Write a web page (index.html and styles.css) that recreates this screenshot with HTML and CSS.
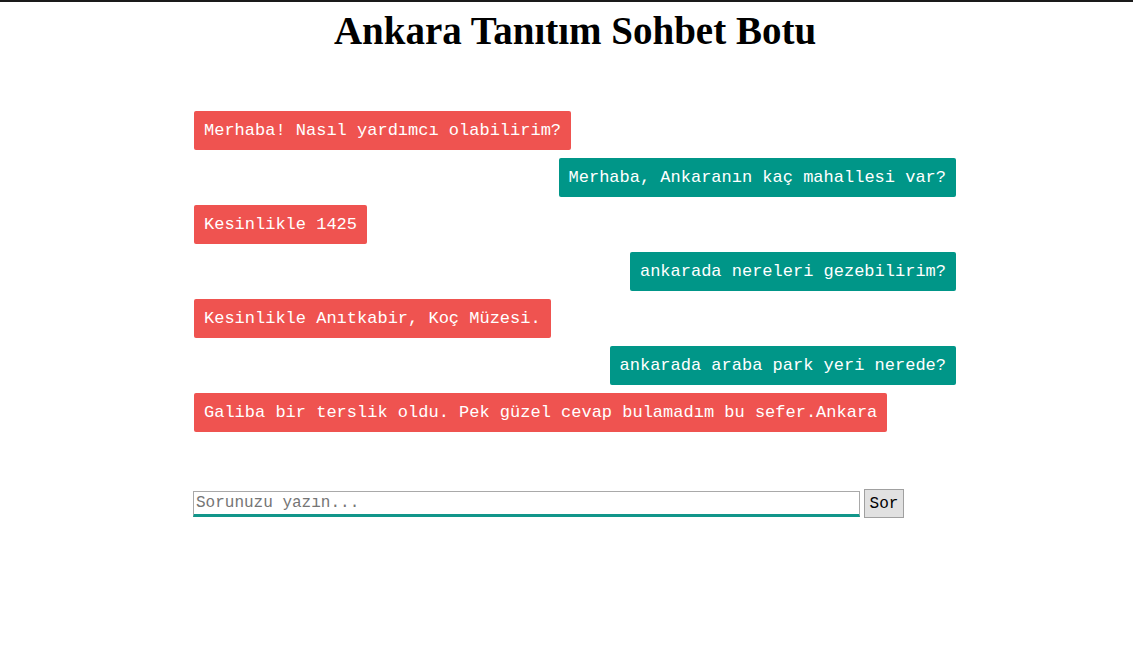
FILE: index.html
```html
<!DOCTYPE html>
<html lang="tr">
<head>
<meta charset="utf-8">
<title>Ankara Tanıtım Sohbet Botu</title>
<link rel="stylesheet" href="styles.css">
</head>
<body>
<div class="page">
  <h1 class="title">Ankara Tanıtım Sohbet Botu</h1>
  <div class="chat">
    <div class="msg bot">Merhaba! Nasıl yardımcı olabilirim?</div>
    <div class="msg user">Merhaba, Ankaranın kaç mahallesi var?</div>
    <div class="msg bot">Kesinlikle 1425</div>
    <div class="msg user">ankarada nereleri gezebilirim?</div>
    <div class="msg bot">Kesinlikle Anıtkabir, Koç Müzesi.</div>
    <div class="msg user">ankarada araba park yeri nerede?</div>
    <div class="msg bot">Galiba bir terslik oldu. Pek güzel cevap bulamadım bu sefer.Ankara</div>
  </div>
  <form class="ask">
    <input class="ask-input" type="text" placeholder="Sorunuzu yazın...">
    <button class="ask-btn" type="button">Sor</button>
  </form>
</div>
</body>
</html>
```

FILE: styles.css
```css
html, body {
  margin: 0;
  padding: 0;
  background: #fff;
}
body {
  border-top: 2px solid #1a1a1a;
  font-family: "Liberation Mono", "Courier New", monospace;
}
.page {
  width: 762px;
  margin-left: 194px;
}
.title {
  margin: 7px 0 0;
  text-align: center;
  font-family: "Liberation Serif", "Times New Roman", serif;
  font-weight: bold;
  font-size: 39px;
  line-height: 44px;
  color: #000;
}
.chat {
  margin-top: 58px;
  display: flex;
  flex-direction: column;
  gap: 8px;
}
.msg {
  padding: 10px 10px;
  font-size: 17px;
  line-height: 19px;
  color: #fff;
  border-radius: 2px;
}
.bot {
  align-self: flex-start;
  background: #ef5350;
}
.user {
  align-self: flex-end;
  background: #009688;
}
.ask {
  margin: 57px 0 0 -1px;
  display: flex;
  align-items: flex-start;
  gap: 4px;
}
.ask-input {
  box-sizing: border-box;
  width: 667px;
  height: 26px;
  margin: 2px 0 0;
  padding: 0 2px;
  border: 1px solid #a9a9a9;
  border-bottom: 3px solid #11968a;
  font-family: "Liberation Mono", "Courier New", monospace;
  font-size: 16px;
  color: #333;
}
.ask-input::placeholder {
  color: #757575;
}
.ask-btn {
  box-sizing: border-box;
  width: 40px;
  height: 29px;
  margin: 0;
  padding: 0;
  border: 1px solid #a0a0a0;
  background: #e1e1e1;
  font-family: "Liberation Mono", "Courier New", monospace;
  font-size: 16px;
  color: #000;
}
```
